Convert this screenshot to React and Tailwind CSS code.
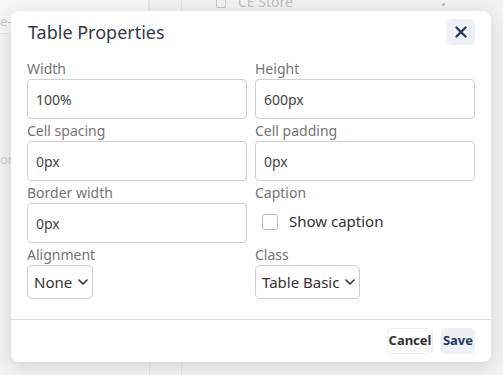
import React from "react";

const font = { fontFamily: '"Noto Sans", "Open Sans", Arial, sans-serif' };

function Field({ label, value }) {
    return (
        <div className="flex flex-col">
            <div className="h-[22px] pt-[2px] text-[14px] leading-[20px] text-[#747474]">{label}</div>
            <div className="h-[40px] flex items-center px-[8px] border border-[#cfcfcf] rounded-[4px] text-[14px] text-[#444]">
                {value}
            </div>
        </div>
    );
}

function Chevron() {
    return (
        <svg width="10" height="6" viewBox="0 0 10 6" fill="none" className="shrink-0">
            <path d="M1 1l4 4 4-4" stroke="#333" strokeWidth="1.6" strokeLinecap="round" strokeLinejoin="round" />
        </svg>
    );
}

function FakeSelect({ value }) {
    return (
        <div className="h-[34px] self-start inline-flex items-center gap-[6px] pl-[6px] pr-[4px] border border-[#cfcfcf] rounded-[5px] text-[15px] text-[#333]">
            <span>{value}</span>
            <Chevron />
        </div>
    );
}

export default function App() {
    return (
        <div className="relative w-[503px] h-[375px] overflow-hidden bg-[#f2f2f2]" style={font}>
            {/* faded app behind the dialog */}
            <div className="flex h-full">
                <div className="w-[150px] border-r border-[#e4e4e4] flex flex-col">
                    <div className="h-[34px] bg-[#f6f6f6] rounded-br-[8px] border-b border-r border-[#e6e6e6] flex items-end pb-[2px] text-[13px] text-[#c8c8c8]">
                        e-
                    </div>
                    <div className="mt-[116px] text-[13px] text-[#cfcfcf]">om</div>
                </div>
                <div className="w-[32px] border-r border-[#e4e4e4]" />
                <div className="flex-1 flex items-start">
                    <div className="-mt-[9px] ml-[34px] flex items-center gap-[12px] text-[14px] text-[#c0c0c0]">
                        <span className="w-[10px] h-[12px] border border-[#c6c6c6] rounded-[1px]" />
                        <span>CE Store</span>
                    </div>
                    <div className="ml-auto mr-[58px] mt-[3px] w-[3px] h-[3px] rounded-full bg-[#bbb]" />
                </div>
            </div>

            {/* dialog */}
            <div className="absolute left-[11px] top-[11px] w-[480px] h-[351px] bg-white rounded-[8px] shadow-[0_4px_18px_rgba(0,0,0,0.13)] flex flex-col">
                <div className="h-[46px] flex items-start justify-between pt-[8px] pl-[17px] pr-[16px]">
                    <div className="text-[18px] leading-[26px] text-[#333a45]">Table Properties</div>
                    <button className="w-[28px] h-[26px] rounded-[5px] bg-[#eef0f5] flex items-center justify-center">
                        <svg width="12" height="12" viewBox="0 0 12 12">
                            <path d="M1.5 1.5l9 9M10.5 1.5l-9 9" stroke="#243757" strokeWidth="2.2" strokeLinecap="round" />
                        </svg>
                    </button>
                </div>

                <div className="grid grid-cols-2 gap-x-[8px] px-[16px] pb-[20px]">
                    <Field label="Width" value="100%" />
                    <Field label="Height" value="600px" />
                    <Field label="Cell spacing" value="0px" />
                    <Field label="Cell padding" value="0px" />
                    <Field label="Border width" value="0px" />
                    <div className="flex flex-col">
                        <div className="h-[22px] pt-[2px] text-[14px] leading-[20px] text-[#747474]">Caption</div>
                        <div className="h-[40px] flex items-center pl-[7px] gap-[11px]">
                            <span className="w-[16px] h-[16px] border border-[#bdbdbd] rounded-[3px] mt-[-3px]" />
                            <span className="text-[15px] text-[#333] mt-[-3px]">Show caption</span>
                        </div>
                    </div>
                    <div className="flex flex-col">
                        <div className="h-[22px] pt-[2px] text-[14px] leading-[20px] text-[#747474]">Alignment</div>
                        <FakeSelect value="None" />
                    </div>
                    <div className="flex flex-col">
                        <div className="h-[22px] pt-[2px] text-[14px] leading-[20px] text-[#747474]">Class</div>
                        <FakeSelect value="Table Basic" />
                    </div>
                </div>

                <div className="border-t border-[#dedede] flex justify-end gap-[8px] py-[8px] pr-[16px]">
                    <button className="h-[26px] w-[46px] bg-white border border-[#ececec] rounded-[5px] text-[13px] font-bold text-[#333]">
                        Cancel
                    </button>
                    <button className="h-[26px] w-[34px] bg-[#eef0f5] rounded-[5px] text-[13px] font-bold text-[#1f3864]">
                        Save
                    </button>
                </div>
            </div>
        </div>
    );
}
